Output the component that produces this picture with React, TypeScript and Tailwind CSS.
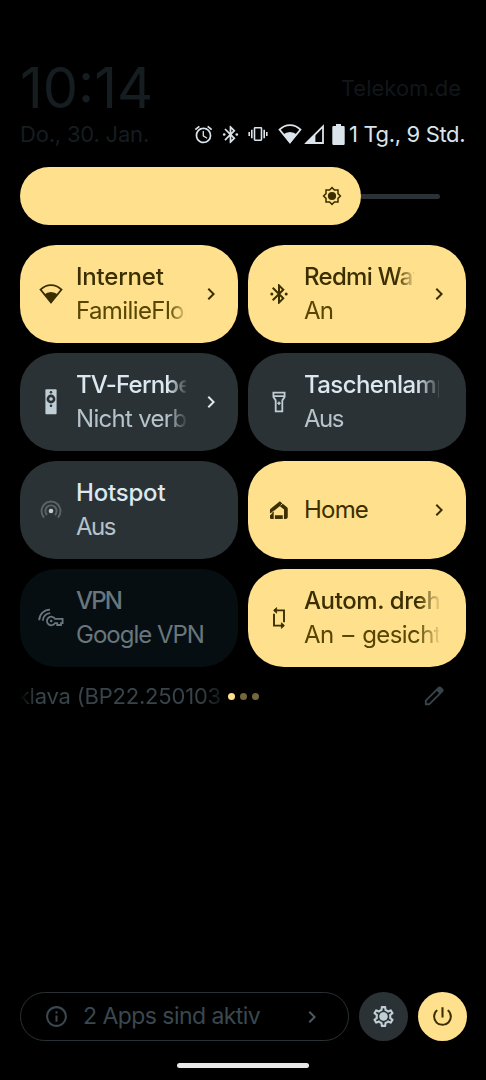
import React from 'react';
import { clsx } from 'clsx';
import { MdAlarm, MdChevronRight, MdInfoOutline, MdOutlineSettings, MdPowerSettingsNew } from 'react-icons/md';

const BluetoothIcon = ({ className }: { className?: string }) => (
  <svg viewBox="0 0 24 24" fill="currentColor" className={clsx('shrink-0', className)}>
    <path d="M17.71 7.71L12 2h-1v7.59L6.41 5 5 6.41 10.59 12 5 17.59 6.41 19 11 14.41V22h1l5.71-5.71-4.3-4.29 4.3-4.29zM13 5.83l1.88 1.88L13 9.59V5.83zm1.88 10.46L13 18.17v-3.76l1.88 1.88z" />
    <circle cx="4.8" cy="12" r="1.5" />
    <circle cx="19.2" cy="12" r="1.5" />
  </svg>
);

const WifiIcon = ({ className }: { className?: string }) => (
  <svg viewBox="0 0 24 20" className={clsx('h-5 w-6 shrink-0', className)}>
    <path d="M12 18.4L1.5 5.6Q6 1.1 12 1.1T22.5 5.6Z" fill="none" stroke="currentColor" strokeWidth="1.8" />
    <path d="M12 19.6L5.2 10.6Q8 8.1 12 8.1T18.8 10.6Z" fill="currentColor" />
  </svg>
);

const VibrateIcon = () => (
  <svg viewBox="0 0 20 16" className="h-4 w-5 shrink-0" fill="none" stroke="currentColor" strokeWidth="1.6">
    <rect x="6.5" y="1.8" width="7" height="12.4" rx="0.6" />
    <path d="M3.8 3.8v8.4M1.2 6v4M16.2 3.8v8.4M18.8 6v4" />
  </svg>
);

const SignalIcon = () => (
  <svg viewBox="0 0 20 20" className="h-5 w-5 shrink-0">
    <path d="M2.4 19L19 2.4V19Z" fill="none" stroke="currentColor" strokeWidth="1.8" />
    <path d="M1 19.8L11.4 9.4V19.8Z" fill="currentColor" />
  </svg>
);

const BatteryIcon = () => (
  <svg viewBox="0 0 13 21" className="h-[21px] w-[13px] shrink-0" fill="currentColor">
    <path d="M4 0h5v2h2.5q1.2 0 1.2 1.2v16.6q0 1.2-1.2 1.2h-10q-1.2 0-1.2-1.2V3.2Q.3 2 1.5 2H4z" />
  </svg>
);

const SunIcon = () => (
  <svg viewBox="-10 -10 20 20" className="h-5 w-5">
    <path
      d="M0-8.4L2.4-6H6V-2.4L8.4 0L6 2.4V6H2.4L0 8.4L-2.4 6H-6V2.4L-8.4 0L-6-2.4V-6H-2.4Z"
      fill="none"
      stroke="currentColor"
      strokeWidth="1.5"
    />
    <circle r="4.1" fill="currentColor" />
  </svg>
);

const RemoteIcon = () => (
  <svg viewBox="0 0 12 26" className="h-[26px] w-3">
    <rect x="0.4" y="0.3" width="11.2" height="25" rx="1" fill="currentColor" />
    <g fill="#2b3235">
      <circle cx="6" cy="3.2" r="1.3" />
      <circle cx="6" cy="10" r="4.4" />
      <circle cx="6" cy="16.8" r="1.3" />
    </g>
    <circle cx="6" cy="10" r="1.8" fill="currentColor" />
  </svg>
);

const TorchIcon = () => (
  <svg viewBox="0 0 14 22" className="h-[22px] w-3.5" fill="none" stroke="currentColor" strokeWidth="1.8">
    <path d="M1.4 1.6H12.6V6L10.3 9.4V20.4H3.7V9.4L1.4 6ZM1.4 5.2H12.6" />
    <path d="M7 10.4v3.6M5.3 12.2h3.4" strokeWidth="1.4" />
  </svg>
);

const HotspotIcon = () => (
  <svg viewBox="-12 -13 24 24" className="h-6 w-6" fill="none" stroke="currentColor" strokeWidth="1.9">
    <path d="M-6.9 6.6A9.5 9.5 0 1 1 6.9 6.6M-3.9 4A5.6 5.6 0 1 1 3.9 4" opacity="0.32" />
    <circle r="2.3" fill="currentColor" stroke="none" />
  </svg>
);

const HomeIcon = () => (
  <svg viewBox="0 0 20 20" className="h-5 w-5" fill="none" stroke="currentColor" strokeWidth="3.7">
    <path d="M2.2 10.7L12 2.7" />
    <path d="M10.2 3.3L16.9 8.6V17Q16.9 17.2 16.5 17.2H14.8" strokeLinejoin="round" />
    <path d="M2.8 9.4V13.2" />
    <path d="M1 15.3L4.7 12.3V19H2.2Q1 19 1 17.8Z" fill="currentColor" stroke="none" />
    <path d="M5.9 17.1H13.9" />
    <path d="M.6 14.4L5.2 10.7M11.6 5.4L14 3.2M14.3 15v4.2" stroke="#ffe08d" strokeWidth="0.8" />
  </svg>
);

const VpnIcon = () => (
  <svg viewBox="0 0 26 20" className="h-5 w-[26px]" fill="none" stroke="currentColor" strokeWidth="1.8">
    <path d="M1.2 12.2A10.8 10.8 0 0 1 12 1.6M4.8 12.8A7.6 7.6 0 0 1 12.2 5.2" />
    <path d="M17 10.9A4.3 4.3 0 1 0 17 15.1H19.2V17H23V15.1H24.6V10.9Z" />
    <circle cx="13.2" cy="13" r="1.3" fill="currentColor" stroke="none" />
  </svg>
);

const RotateIcon = () => (
  <svg viewBox="0 0 14 24" className="h-6 w-3.5" fill="none" stroke="currentColor" strokeWidth="1.9">
    <path d="M2 4.4H12V16.2M12 19.6H2V7.8" />
    <path d="M4.6 1.6V7.2L1.6 4.4ZM9.4 16.8V22.4L12.4 19.6Z" fill="currentColor" strokeWidth="0.8" />
  </svg>
);

const PencilIcon = () => (
  <svg viewBox="0 0 20 20" className="h-5 w-5" fill="none" stroke="currentColor" strokeWidth="1.9" strokeLinejoin="round">
    <path d="M1.8 18.2V14.6L14.6 1.8Q15.6 1 16.6 1.8L18.2 3.4Q19 4.4 18.2 5.4L5.4 18.2Z" />
    <path d="M13.6 4.4L16 2L18 4L15.6 6.4Z" fill="currentColor" />
  </svg>
);

interface TileProps {
  icon: React.ReactNode;
  title: string;
  titleClass?: string;
  subtitle?: string;
  subtitleClass?: string;
  state?: 'on' | 'off' | 'disabled';
  chevron?: boolean;
  fade?: boolean;
}

const Tile = ({
  icon,
  title,
  titleClass = 'tracking-[-0.2px]',
  subtitle,
  subtitleClass = 'tracking-[-0.6px]',
  state = 'off',
  chevron,
  fade,
}: TileProps) => (
  <div
    className={clsx(
      'flex h-[98px] items-center rounded-[36px] pl-4',
      state === 'on' && 'bg-[#ffe08d] text-[#3b2f00]',
      state === 'off' && 'bg-[#2b3235] text-[#dbe8f0]',
      state === 'disabled' && 'bg-[#060e11] text-[#69767d]'
    )}
  >
    <div className={clsx('flex w-[29px] shrink-0 justify-center', state === 'off' && 'text-[#bfcdd5]')}>{icon}</div>
    <div
      className={clsx(
        'ml-[11px] shrink-0 overflow-hidden text-2xl leading-[34px] whitespace-nowrap',
        chevron ? 'w-[110px]' : 'w-[135px]',
        fade && 'mask-[linear-gradient(to_right,black_84%,transparent_102%)]'
      )}
    >
      <div className={clsx(subtitle && 'font-medium', titleClass)}>{title}</div>
      {subtitle && (
        <div
          className={clsx(
            state === 'on' && 'text-[#574500]',
            state === 'off' && 'text-[#b5c3ca]',
            subtitleClass
          )}
        >
          {subtitle}
        </div>
      )}
    </div>
    {chevron && <MdChevronRight className="ml-[13px] h-6 w-6 shrink-0" />}
  </div>
);

export default function App() {
  return (
    <div className="flex h-[1080px] w-[486px] flex-col overflow-hidden bg-black px-5 pt-[59px] font-['Inter',sans-serif]">
      {/* Clock and carrier */}
      <div className="flex h-[58px] items-center justify-between text-[#151d20]">
        <div className="text-[56px] leading-[58px]">10:14</div>
        <div className="pr-[5px] text-[22px] leading-[58px] text-[#101619]">Telekom.de</div>
      </div>

      {/* Date and status icons */}
      <div className="mt-px flex h-8 items-center text-[22px] leading-8 whitespace-nowrap">
        <div className="w-[173px] shrink-0 tracking-[-0.2px] text-[#151d20]">Do., 30. Jan.</div>
        <div className="flex items-center text-[#dbe4ea]">
          <MdAlarm className="h-[21px] w-[21px] shrink-0" />
          <BluetoothIcon className="ml-[6px] h-[21px] w-[21px]" />
          <div className="ml-[7px]">
            <VibrateIcon />
          </div>
          <WifiIcon className="ml-[10px]" />
          <div className="ml-[2px]">
            <SignalIcon />
          </div>
          <div className="ml-[8px]">
            <BatteryIcon />
          </div>
          <div className="ml-[4px] tracking-[-0.35px]">1 Tg., 9 Std.</div>
        </div>
      </div>

      {/* Brightness */}
      <div className="mt-[17px] flex h-[58px] items-center">
        <div className="flex h-full w-[341px] items-center justify-end rounded-full bg-[#ffe08d] pr-[19px] text-[#3b2f00]">
          <SunIcon />
        </div>
        <div className="h-[5px] w-[79px] rounded-r-full bg-[#2b3235]" />
      </div>

      {/* Tiles */}
      <div className="mt-5 grid grid-cols-2 gap-[10px]">
        <Tile icon={<WifiIcon />} title="Internet" subtitle="FamilieFlora" state="on" chevron fade />
        <Tile
          icon={<BluetoothIcon className="h-6 w-6" />}
          title="Redmi Watch"
          titleClass="tracking-[-0.7px]"
          subtitle="An"
          subtitleClass="tracking-[-0.8px]"
          state="on"
          chevron
          fade
        />
        <Tile
          icon={<RemoteIcon />}
          title="TV-Fernbedienung"
          titleClass="tracking-[-0.8px]"
          subtitle="Nicht verbunden"
          subtitleClass="tracking-[-0.7px]"
          chevron
          fade
        />
        <Tile
          icon={<TorchIcon />}
          title="Taschenlampe"
          titleClass="tracking-[-0.6px]"
          subtitle="Aus"
          subtitleClass="tracking-[-1.5px]"
          fade
        />
        <Tile icon={<HotspotIcon />} title="Hotspot" subtitle="Aus" subtitleClass="tracking-[-1.5px]" />
        <Tile icon={<HomeIcon />} title="Home" titleClass="tracking-[-0.8px]" state="on" chevron />
        <Tile
          icon={<VpnIcon />}
          title="VPN"
          titleClass="tracking-[-1.8px]"
          subtitle="Google VPN"
          subtitleClass="tracking-[-1px]"
          state="disabled"
        />
        <Tile
          icon={<RotateIcon />}
          title="Autom. drehen"
          titleClass="tracking-[-0.4px]"
          subtitle="An – gesichtsbasiert"
          subtitleClass="tracking-[-0.6px] [word-spacing:2.5px]"
          state="on"
          fade
        />
      </div>

      {/* Build number, page dots, edit */}
      <div className="mt-[13px] flex h-8 items-center text-[#37444a]">
        <div className="flex w-[201px] justify-end overflow-hidden text-[22px] leading-8 tracking-[-0.2px] whitespace-nowrap mask-[linear-gradient(to_right,transparent_0%,black_8%,black_90%,transparent_105%)]">
          Baklava (BP22.250103
        </div>
        <div className="ml-[7px] flex gap-[5px]">
          <span className="h-[7px] w-[7px] rounded-full bg-[#ffe08d]" />
          <span className="h-[7px] w-[7px] rounded-full bg-[#75663d]" />
          <span className="h-[7px] w-[7px] rounded-full bg-[#75663d]" />
        </div>
        <div className="mr-[22px] ml-auto">
          <PencilIcon />
        </div>
      </div>

      {/* Footer */}
      <div className="mt-auto -mr-px flex h-[49px] items-center">
        <div className="flex h-[49px] w-[329px] shrink-0 items-center rounded-full border-[1.5px] border-[#293134] pl-[23px] text-[#3a484f]">
          <MdInfoOutline className="h-[25px] w-[25px] shrink-0" />
          <span className="ml-[14px] w-[204px] text-[23px] tracking-[-0.55px] whitespace-nowrap">2 Apps sind aktiv</span>
          <MdChevronRight className="ml-[13px] h-6 w-6 shrink-0 text-[#4c5b63]" />
        </div>
        <div className="ml-[10px] flex h-[49px] w-[49px] shrink-0 items-center justify-center rounded-full bg-[#2b3235] text-[#bfcdd5]">
          <svg viewBox="0 0 24 24" className="h-[25px] w-[25px]" fill="currentColor">
            <MdOutlineSettings size={24} />
            <circle cx="12" cy="12" r="3.8" />
          </svg>
        </div>
        <div className="ml-[10px] flex h-[49px] w-[49px] shrink-0 items-center justify-center rounded-full bg-[#ffe08d] text-[#3b2f00]">
          <MdPowerSettingsNew className="h-[25px] w-[25px]" />
        </div>
      </div>

      {/* Gesture bar */}
      <div className="mx-auto mt-[22px] mb-3 h-[5px] w-[132px] shrink-0 rounded-full bg-[#e8e8e8]" />
    </div>
  );
}
